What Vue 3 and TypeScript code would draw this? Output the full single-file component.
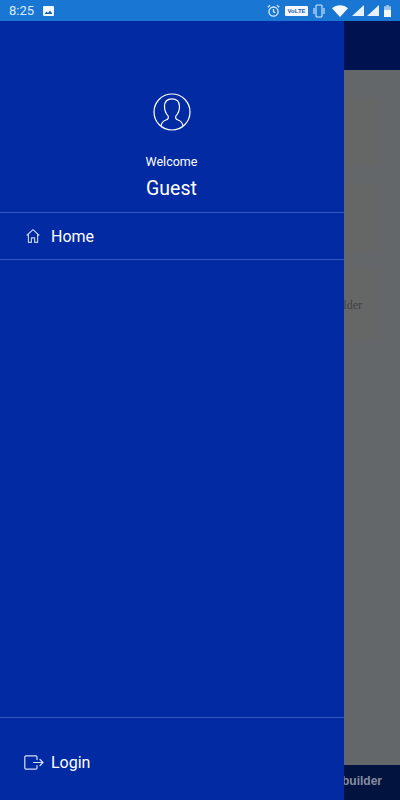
<script setup lang="ts">
const cards: { label: string }[] = [{ label: '' }, { label: '' }, { label: 'Resume builder' }]
</script>

<template>
  <div class="phone">
    <header class="status">
      <div class="status-left">
        <span class="time">8:25</span>
        <svg class="pic" width="11" height="10" viewBox="0 0 11 10">
          <rect width="11" height="10" rx="1" fill="#f4f8fd" />
          <path d="M1.500 8 L3.500 5.500 L5 7 L7 4.500 L9.500 8 Z" fill="#1b5fb0" />
        </svg>
      </div>
      <div class="status-right">
        <svg class="i-alarm" width="13" height="14" viewBox="0 0 13 14" fill="none" stroke="#dcebfa" stroke-width="1.300">
          <circle cx="6.500" cy="7.600" r="4.600" />
          <path d="M6.500 5v2.800l1.800 1M.8 3.200 3 1.200M12.200 3.200 10 1.200" />
        </svg>
        <span class="volte">VoLTE</span>
        <svg class="i-vib" width="12" height="14" viewBox="0 0 12 14" fill="none" stroke="#dcebfa" stroke-width="1.100">
          <rect x="3" y="1" width="6" height="12" rx="1" />
          <path d="M1 4v6M11 4v6" />
        </svg>
        <svg class="i-wifi" width="16" height="12" viewBox="0 0 16 12">
          <path d="M0 3.300 C4.500 -0.800 11.500 -0.800 16 3.300 L8 12 Z" fill="#f4f8fd" />
        </svg>
        <svg class="i-sig" width="12" height="11" viewBox="0 0 12 11"><path d="M12 0V11H0Z" fill="#e8f1fb" /></svg>
        <svg class="i-sig2" width="12" height="11" viewBox="0 0 12 11"><path d="M12 0V11H0Z" fill="#e8f1fb" /></svg>
        <svg class="i-bat" width="7" height="12" viewBox="0 0 7 12">
          <path d="M2.300 0h2.400v1.300H6.500a.5.5 0 0 1 .5.5V11.500a.5.5 0 0 1-.5.5H.5a.5.5 0 0 1-.5-.5V1.800a.5.5 0 0 1 .5-.5h1.800Z" fill="#9fc4ec" />
          <rect x="0" y="5" width="7" height="7" rx=".5" fill="#f4f8fd" />
        </svg>
      </div>
    </header>

    <div class="content">
      <div class="appbar"></div>
      <main class="list">
        <div v-for="(card, i) in cards" :key="i" class="card">
          <span class="card-label">{{ card.label }}</span>
        </div>
      </main>
      <footer class="bottom">Resume builder</footer>

      <aside class="drawer">
        <section class="profile">
          <svg class="avatar" width="38" height="38" viewBox="0 0 38 38" fill="none" stroke="#fff" stroke-width="1.200">
            <circle cx="19" cy="19" r="18" />
            <path d="M8 33 C8.500 29.500 10 28 13 27 C15.500 26.200 15.800 24.500 15 22.800 C12.800 20.500 11.500 17 11.500 13.500 C11.500 8.500 14.500 5.800 19 5.800 C23.500 5.800 26.500 8.500 26.500 13.500 C26.500 17 25.200 20.500 23 22.800 C22.200 24.500 22.500 26.200 25 27 C28 28 29.500 29.500 30 33" stroke-linejoin="round" />
          </svg>
          <div class="welcome">Welcome</div>
          <div class="guest">Guest</div>
        </section>
        <nav class="menu">
          <a class="item">
            <svg width="14" height="14" viewBox="0 0 14 14" fill="none" stroke="#c6d3f3" stroke-width="1.150" stroke-linejoin="round">
              <path d="M.7 6.500 7 .7 13.300 6.500M2.400 5.200V13.300H5.400V8.800H8.600V13.300H11.600V5.200" />
            </svg>
            <span>Home</span>
          </a>
        </nav>
        <div class="login-wrap">
          <a class="item login">
            <svg width="20" height="15" viewBox="0 0 20 15" fill="none" stroke="#d5e0f8" stroke-width="1.200" stroke-linejoin="round" stroke-linecap="round">
              <path d="M13 4.500V2a1.200 1.200 0 0 0-1.200-1.200H2A1.200 1.200 0 0 0 .8 2v11A1.200 1.200 0 0 0 2 14.200h9.800A1.200 1.200 0 0 0 13 13v-2.500" />
              <path d="M9.500 7.500h9.500M16 4.500l3 3-3 3" />
            </svg>
            <span>Login</span>
          </a>
        </div>
      </aside>
    </div>
  </div>
</template>

<style>
html, body { margin: 0; background: #646769; }
</style>

<style scoped>
.phone {
  width: 400px;
  height: 800px;
  display: flex;
  flex-direction: column;
  overflow: hidden;
  font-family: Roboto, "Liberation Sans", sans-serif;
}
.status {
  height: 21px;
  flex: none;
  background: #1976d2;
  display: flex;
  align-items: center;
  justify-content: space-between;
  padding: 0 9px;
  color: #dcebfa;
}
.status-left { display: flex; align-items: center; gap: 9px; }
.time { font-size: 13px; }
.status-right { display: flex; align-items: center; gap: 5px; }
.i-wifi { margin-left: 2px; }
.i-sig { margin-left: -1px; }
.i-sig2 { margin-left: -2px; }
.volte {
  width: 23px;
  height: 10px;
  background: #f4f8fd;
  color: #1b5fb0;
  font: 700 6px/10px "Liberation Sans", sans-serif;
  text-align: center;
  border-radius: 1px;
  overflow: hidden;
}
.content {
  flex: 1;
  position: relative;
  display: flex;
  flex-direction: column;
  min-height: 0;
}
.appbar { height: 49px; flex: none; background: #00124f; }
.list {
  flex: 1;
  background: #646769;
  padding: 28px 20px 0 20px;
  display: flex;
  flex-direction: column;
  gap: 18px;
  min-height: 0;
}
.card {
  height: 68px;
  background: #656767;
  display: flex;
  align-items: center;
  justify-content: flex-end;
  padding-right: 18px;
}
.card-label {
  font: 12px "Liberation Serif", serif;
  color: #3f4144;
  position: relative;
  top: 1px;
}
.bottom {
  height: 35px;
  flex: none;
  background: #03133f;
  color: #868da0;
  font: 700 12px/33px "Liberation Sans", sans-serif;
  text-align: right;
  padding-right: 18px;
}
.drawer {
  position: absolute;
  left: 0;
  top: 0;
  bottom: 0;
  width: 344px;
  background: #012aa3;
  display: flex;
  flex-direction: column;
  color: #fff;
}
.profile {
  height: 192px;
  box-sizing: border-box;
  padding: 72px 1px 0 0;
  display: flex;
  flex-direction: column;
  align-items: center;
  border-bottom: 1px solid #3357bd;
}
.avatar { flex: none; position: relative; left: 0.500px; }
.welcome { margin-top: 23px; font-size: 12.500px; line-height: 16px; }
.guest { margin-top: 7px; font-size: 19.500px; line-height: 24px; }
.menu {
  height: 47px;
  box-sizing: border-box;
  border-bottom: 1px solid #3357bd;
  display: flex;
  align-items: center;
}
.item {
  display: flex;
  align-items: center;
  gap: 11px;
  padding-left: 26px;
  font-size: 16px;
}
.login-wrap {
  margin-top: auto;
  height: 83px;
  box-sizing: border-box;
  border-top: 1px solid #3357bd;
  padding-top: 35px;
}
.login { padding-left: 24px; gap: 7px; }
</style>
